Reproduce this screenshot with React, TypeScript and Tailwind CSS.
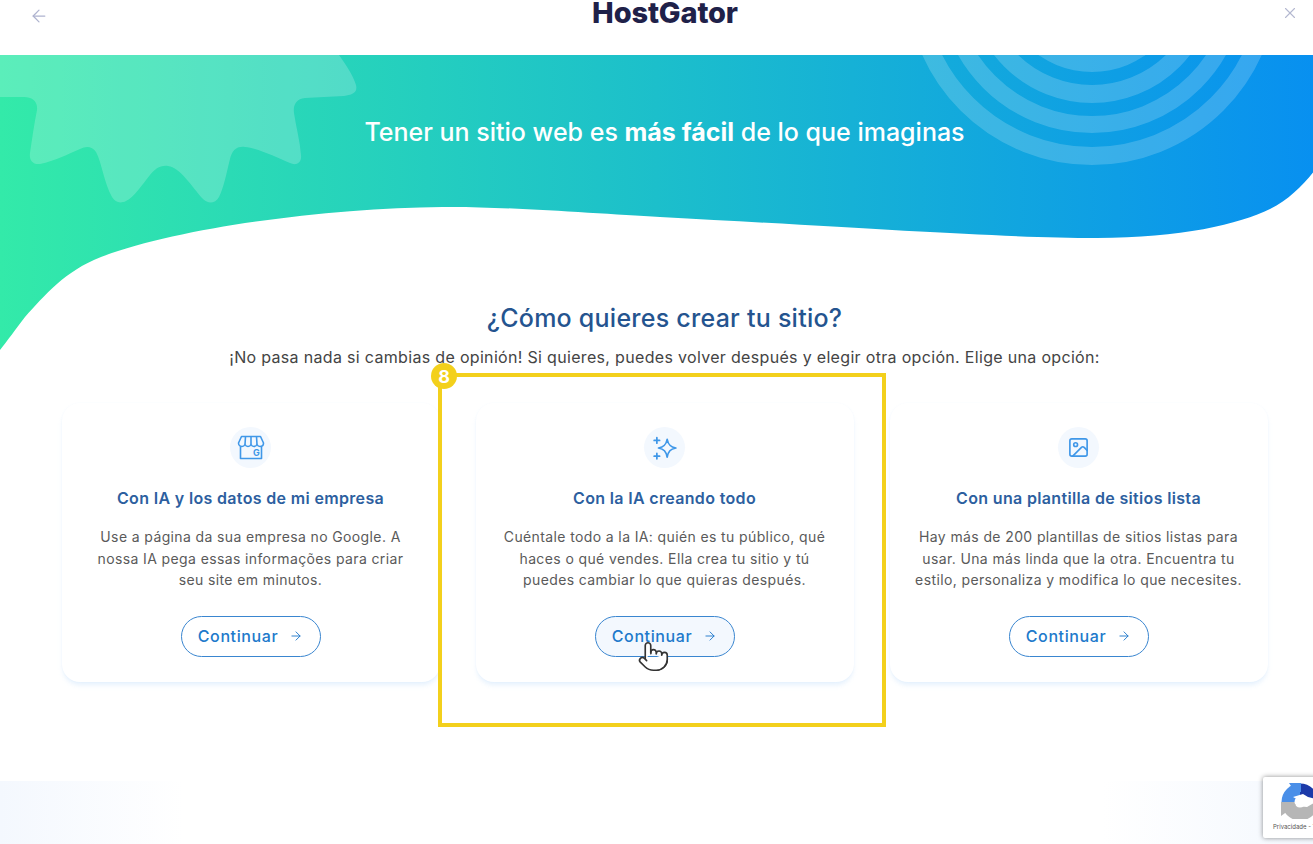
import { ArrowLeft, ArrowRight, Image, Pointer, X } from "lucide-react";

function StoreIcon() {
  return (
    <svg width="28" height="25" viewBox="0 0 28 25" fill="none" stroke="#3f97e8" strokeWidth="1.6" strokeLinejoin="round">
      <path d="M4.5 1.5H23.5L26.5 8C26.5 10.5 24.5 11.5 23 11.5C21.5 11.5 20.5 10.5 20 9.5C19.5 10.5 18 11.5 17 11.5C15.5 11.5 14.5 10.5 14 9.5C13.5 10.5 12.5 11.5 11 11.5C9.5 11.5 8.5 10.5 8 9.5C7.5 10.5 6.5 11.5 5 11.5C3.5 11.5 1.5 10.5 1.5 8Z" />
      <path d="M8.5 1.5L8 9.5M14 1.5V9.5M19.5 1.5L20 9.5" />
      <path d="M3.5 11.5V23.5H24.5V11.5" />
      <text x="16" y="21" fontSize="9" fontWeight="700" fill="#3f97e8" stroke="none" fontFamily="Inter, sans-serif">G</text>
    </svg>
  );
}

function SparkleIcon() {
  return (
    <svg width="26" height="26" viewBox="0 0 24 24" fill="none" stroke="#3f97e8" strokeWidth="1.6" strokeLinejoin="round" strokeLinecap="round">
      <path d="M14 4C15 9 17 11 22 12C17 13 15 15 14 20.5C13 15 11 13 6 12C11 11 13 9 14 4Z" />
      <path d="M4.5 2.5V7.5M2 5H7M4.5 17V22M2 19.5H7" />
    </svg>
  );
}

function RecaptchaLogo() {
  return (
    <svg width="38" height="36" viewBox="0 0 38 36" fill="none">
      <path d="M7 19A12 12 0 0 1 19 7" stroke="#4a8fe8" strokeWidth="13" />
      <path d="M19 7A12 12 0 0 1 31 19" stroke="#1c3aa9" strokeWidth="13" />
      <path d="M31 19A12 12 0 0 1 7 19" stroke="#b6b6b6" strokeWidth="13" />
      <path d="M8 0L20 0L20 9L14 9Z" fill="#4a8fe8" />
      <path d="M0 19H12L15 22L0 33Z" fill="#b6b6b6" />
      <path d="M12 14L22 11L27 14L38 17L26 24L15 23L19 18Z" fill="#ffffff" />
    </svg>
  );
}

const cards = [
  {
    title: "Con IA y los datos de mi empresa",
    lines: ["Use a página da sua empresa no Google. A", "nossa IA pega essas informações para criar", "seu site em minutos."],
    icon: <StoreIcon />,
  },
  {
    title: "Con la IA creando todo",
    lines: ["Cuéntale todo a la IA: quién es tu público, qué", "haces o qué vendes. Ella crea tu sitio y tú", "puedes cambiar lo que quieras después."],
    icon: <SparkleIcon />,
    hover: true,
  },
  {
    title: "Con una plantilla de sitios lista",
    lines: ["Hay más de 200 plantillas de sitios listas para", "usar. Una más linda que la otra. Encuentra tu", "estilo, personaliza y modifica lo que necesites."],
    icon: <Image size={23} color="#3f97e8" strokeWidth={1.7} />,
  },
];

export default function App() {
  return (
    <div className="relative h-[844px] w-[1313px] overflow-hidden bg-white font-['Inter',sans-serif]">
      <div className="relative w-[1329px]">
        {/* Top bar */}
        <header className="flex h-[55px] items-start justify-between pl-[29px] pr-[30px]">
          <ArrowLeft size={20} color="#aeb3cf" strokeWidth={1.5} className="mt-[6px]" />
          <span className="text-[29px] font-extrabold leading-[26px] tracking-[-0.15px] text-[#1f2149]">HostGator</span>
          <X size={18} color="#b4b8d0" strokeWidth={1.5} className="mt-[4px]" />
        </header>

        {/* Wave banner */}
        <div className="relative">
          <svg className="absolute left-0 top-0" width="1329" height="295" viewBox="0 0 1329 295">
            <defs>
              <linearGradient id="wave" x1="0" y1="0" x2="1313" y2="0" gradientUnits="userSpaceOnUse">
                <stop offset="0" stopColor="#33eaa9" />
                <stop offset="0.5" stopColor="#1cbfcb" />
                <stop offset="1" stopColor="#0890f0" />
              </linearGradient>
              <clipPath id="waveClip">
                <path d="M0 0H1329V95C1316 115 1298 140 1270 154C1240 169 1180 183 1097 183C1000 183 868 173 660 162C600 159 500 151 442 152C330 153 180 172 101 202C65 216 45 240 25 262C15 275 8 285 0 295Z" />
              </clipPath>
            </defs>
            <g clipPath="url(#waveClip)">
              <rect width="1329" height="295" fill="url(#wave)" />
              <path
                d="M339 0C346 10 353 20 356 30C358 38 352 40 344 41C330 42 318 42 305 43C296 44 293 50 294 58C296 72 300 86 301 100C302 108 296 111 290 108C276 102 258 93 245 92C236 91 232 96 230 104C226 120 224 132 219 142C215 149 208 149 203 144C192 132 180 112 168 111C160 110 155 114 150 120C142 130 134 142 126 146C120 149 115 147 112 142C104 128 102 108 96 97C92 91 86 91 80 94C68 99 55 106 40 109C32 110 29 104 30 98C32 84 34 70 37 55C38 46 32 42 24 42L0 42V0Z"
                fill="#fff"
                fillOpacity="0.2"
              />
              <g fill="none" stroke="#fff" strokeOpacity="0.18">
                <circle cx="1092" cy="-76" r="177" strokeWidth="18" />
                <circle cx="1092" cy="-76" r="145.5" strokeWidth="17" />
                <circle cx="1092" cy="-76" r="115" strokeWidth="18" />
              </g>
              <circle cx="1092" cy="-76" r="93" fill="#fff" fillOpacity="0.18" />
            </g>
          </svg>

          <div className="relative flex flex-col items-center">
            <p className="mt-[62px] text-[25px] font-medium leading-[30px] text-white">
              Tener un sitio web es <strong className="font-bold">más fácil</strong> de lo que imaginas
            </p>
            <h1 className="mt-[156px] text-[25px] font-medium leading-[30px] tracking-[0.25px] text-[#24548f]">¿Cómo quieres crear tu sitio?</h1>
            <p className="mt-[13px] text-[16px] leading-[22px] tracking-[0.32px] text-[#444444]">
              ¡No pasa nada si cambias de opinión! Si quieres, puedes volver después y elegir otra opción. Elige una opción:
            </p>

            {/* Option cards */}
            <div className="mt-[35px] flex gap-[36px]">
              {cards.map((card) => (
                <div
                  key={card.title}
                  className="flex h-[279px] w-[378px] flex-col items-center rounded-[18px] bg-white pt-[24px] shadow-[0_4px_5px_-1px_rgba(190,220,250,0.4),0_0_2px_rgba(215,232,250,0.2)]"
                >
                  <div className="flex h-[41px] w-[41px] items-center justify-center rounded-full bg-[#f3f8fe]">{card.icon}</div>
                  <h2 className="mt-[19px] text-[16px] font-semibold leading-[22px] tracking-[0.34px] text-[#2d5f9f]">{card.title}</h2>
                  <div className="mt-[17px] text-center text-[14px] leading-[21.5px] tracking-[0.38px] text-[#5a5a5a]">
                    {card.lines.map((line) => (
                      <p key={line} className="whitespace-nowrap">{line}</p>
                    ))}
                  </div>
                  <button
                    className={`mt-[25px] flex h-[41px] w-[140px] items-center justify-center gap-[11px] rounded-full border border-[#3a86d0] text-[16px] font-medium tracking-[0.6px] text-[#2079cb] ${card.hover ? "bg-[#f3f8fe]" : "bg-white"}`}
                  >
                    Continuar
                    <ArrowRight size={14} strokeWidth={1.6} />
                  </button>
                </div>
              ))}
            </div>
          </div>
        </div>
      </div>

      {/* Faded footer strip */}
      <div className="absolute bottom-0 left-0 h-[63px] w-full bg-[linear-gradient(90deg,#f4f8fe_0%,#ffffff_14%,#ffffff_84%,#f4f8fe_100%)]" />

      {/* Tutorial highlight */}
      <div className="absolute left-[438px] top-[373px] h-[354px] w-[448px] border-4 border-[#f3d01c]" />
      <div className="absolute left-[431px] top-[363px] flex h-[26px] w-[26px] items-center justify-center rounded-full bg-[#f3d01c] text-[18px] font-bold text-white">
        8
      </div>

      <Pointer size={33} fill="#ffffff" color="#333333" strokeWidth={1.2} className="absolute left-[637px] top-[640px]" />

      {/* reCAPTCHA badge */}
      <div className="absolute left-[1263px] top-[777px] flex h-[61px] w-[256px] flex-col rounded-[2px] bg-white pl-[18px] pt-[6px] shadow-[0_0_5px_rgba(0,0,0,0.45)]">
        <RecaptchaLogo />
        <span className="-ml-[8px] mt-[4px] text-[6px] leading-[8px] text-[#555555]">Privacidade - Termos</span>
      </div>
    </div>
  );
}
